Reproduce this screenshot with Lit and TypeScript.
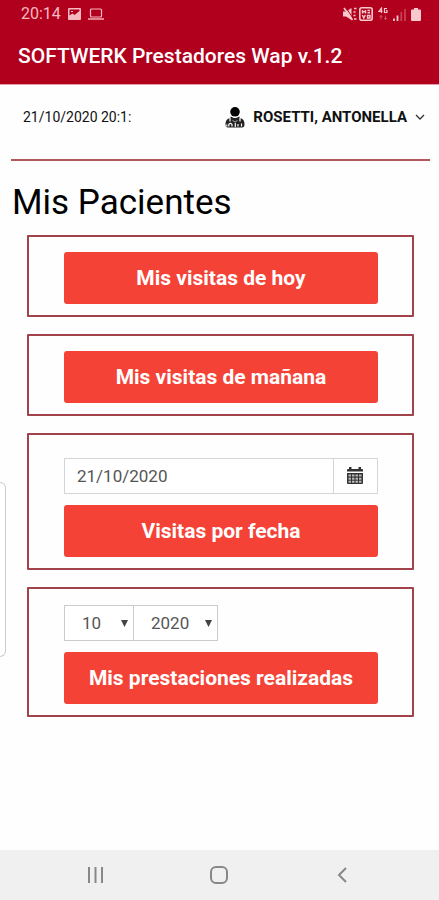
import { LitElement, html, css, svg } from "lit";
import { customElement, state } from "lit/decorators.js";

const months = ["1", "2", "3", "4", "5", "6", "7", "8", "9", "10", "11", "12"];
const years = ["2018", "2019", "2020", "2021"];

const pictureIcon = html`<svg class="icon" width="13" height="12" viewBox="0 0 13 12" aria-hidden="true">
  <path fill="currentColor" fill-rule="evenodd" d="M1 0h11a1 1 0 0 1 1 1v10a1 1 0 0 1-1 1H1a1 1 0 0 1-1-1V1a1 1 0 0 1 1-1zM1.500 1.500v6l3-2 2 1.500 5-4V1.500zM3 3h2v1H3z"/>
</svg>`;

const laptopIcon = html`<svg class="icon" width="16" height="12" viewBox="0 0 16 12" aria-hidden="true">
  <rect x="2.500" y="1" width="11" height="8" rx="1" fill="none" stroke="currentColor" stroke-width="1.200"/>
  <path d="M0 11h16" stroke="currentColor" stroke-width="1.400"/>
</svg>`;

const muteIcon = html`<svg class="icon" width="14" height="14" viewBox="0 0 14 14" aria-hidden="true">
  <path fill="currentColor" d="M0 4.500h3L8.500 1v12L3 9.500H0z"/>
  <path d="M2.500 0l8 12" stroke="#b1001d" stroke-width="1"/>
  <path d="M1 1l8.500 12" stroke="currentColor" stroke-width="1.600"/>
  <path d="M11 1.500h2.500M10.500 5h2M10.500 8.500h2M11 12h2.500" stroke="currentColor" stroke-width="1.500"/>
</svg>`;

const volteIcon = html`<svg class="icon" width="14" height="14" viewBox="0 0 14 14" aria-hidden="true">
  <rect x=".8" y=".8" width="12.400" height="12.400" rx="2" fill="none" stroke="currentColor" stroke-width="1.600"/>
  <path d="M3.500 3v3.500M3.500 4.700h3M6.500 3v3.500M8.500 3.500h2.500M8.500 5.800h2.500M3.300 8l1.500 3 1.500-3M8.500 8.500h2.500v2.500H8.500z" fill="none" stroke="currentColor" stroke-width="1.400"/>
</svg>`;

const dataIcon = html`<svg class="icon" width="10" height="14" viewBox="0 0 10 14" aria-hidden="true">
  <path d="M3.500 6V1L1 4.300h3.500M9 1.500H6.500v4H9V3.500H8" fill="none" stroke="currentColor" stroke-width="1.200"/>
  <path d="M3 8.500v4M1.500 10L3 8.500 4.500 10M7.500 8.500v4M6 11l1.500 1.500L9 11" fill="none" stroke="currentColor" stroke-width="1" opacity=".4"/>
</svg>`;

const signalIcon = html`<svg class="icon" width="13" height="13" viewBox="0 0 13 13" aria-hidden="true">
  <path d="M1 10.500V13M4.500 7.500V13" stroke="currentColor" stroke-width="1.800"/>
  <path d="M8.300 4v9M12 1v12" stroke="currentColor" stroke-width="1.600" opacity=".35"/>
</svg>`;

const batteryIcon = html`<svg class="icon" width="10" height="13" viewBox="0 0 10 13" aria-hidden="true">
  <path fill="currentColor" d="M3 0h4v1.500h2a1 1 0 0 1 1 1V12a1 1 0 0 1-1 1H1a1 1 0 0 1-1-1V2.500a1 1 0 0 1 1-1h2z"/>
</svg>`;

const doctorIcon = html`<svg class="icon" width="20" height="21" viewBox="0 0 20 21" aria-hidden="true">
  <circle cx="10" cy="4.800" r="4.800" fill="#000"/>
  <path fill="#111" d="M5.500 9.500l4.500 2 4.500-2v5h-9z"/>
  <path fill="#222" d="M5 11c-3 .5-4.500 3-4.500 6 0 2.500.8 3.500 2.500 3.500h14c1.700 0 2.500-1 2.500-3.500 0-3-1.500-5.500-4.500-6z"/>
  <path d="M5 11v3.500M15 11v3.500M3.800 19.500v-2a1.700 1.700 0 0 1 3.200 0v2M10.300 16v4M13 19.500v-2.500M16.500 19.500v-3M1.800 17.500v2" fill="none" stroke="#fff" stroke-width="1.200"/>
  <path d="M7.500 13.500l2.500 1.500 2.500-1.500" fill="none" stroke="#ccc" stroke-width=".8"/>
</svg>`;

const chevronIcon = html`<svg class="icon" width="10" height="6" viewBox="0 0 10 6" aria-hidden="true">
  <path d="M1 1l4 4 4-4" fill="none" stroke="#333" stroke-width="1.300"/>
</svg>`;

const calendarIcon = html`<svg class="icon" width="16" height="17" viewBox="0 0 16 17" aria-hidden="true">
  <path fill="#333" d="M0 4.500V3a1 1 0 0 1 1-1h1V0h2.500v2h7V0H14v2h1a1 1 0 0 1 1 1v1.500z"/>
  <path fill="#333" d="M0 6h16v10a1 1 0 0 1-1 1H1a1 1 0 0 1-1-1z"/>
  ${[1.5, 5, 8.5, 12].map((x) =>
    [7.5, 10.7, 13.7].map((y) => svg`<rect x=${x} y=${y} width="2.500" height="2" fill="#bbb"/>`)
  )}
</svg>`;

@customElement("app-root")
export class AppRoot extends LitElement {
  @state() private visitDate = "21/10/2020";
  @state() private month = "10";
  @state() private year = "2020";

  static styles = css`
    :host {
      display: flex;
      flex-direction: column;
      position: relative;
      min-height: 100vh;
      background: #fefefe;
      color: #111;
      font-family: Roboto, "Liberation Sans", sans-serif;
    }
    * { box-sizing: border-box; }
    .icon { display: block; flex: none; }
    button, input, select { font-family: inherit; margin: 0; }
    .top {
      background: #b1001d;
      border-bottom: 1px solid #e0a0a8;
      color: #fff;
    }
    .status {
      display: flex;
      align-items: center;
      justify-content: space-between;
      height: 28px;
      padding: 0 18px 0 21px;
      color: #f6b9c0;
      font-size: 16px;
      line-height: 28px;
    }
    .group { display: flex; align-items: center; gap: 7px; }
    .radio { gap: 2px; color: #f9c8cd; }
    .radio .icon:nth-child(n + 3) { margin-left: 3px; }
    .title {
      margin: 0;
      padding: 0 18px;
      font-size: 21px;
      font-weight: 500;
      line-height: 56px;
    }
    .user {
      display: flex;
      align-items: center;
      justify-content: space-between;
      height: 76px;
      margin: 0 9px 0 11px;
      padding: 0 5px 10px 12px;
      border-bottom: 2px solid #b0585c;
    }
    .clock { font-size: 14px; line-height: 20px; white-space: nowrap; }
    .account {
      display: flex;
      align-items: center;
      padding: 0;
      border: 0;
      background: none;
      color: #111;
      font-size: 15px;
      font-weight: 700;
      line-height: 20px;
      white-space: nowrap;
      gap: 8px;
    }
    h1 {
      margin: 21px 12px 11px;
      color: #000;
      font-size: 35px;
      font-weight: 400;
      line-height: 42px;
    }
    main { flex: 1; }
    .cards {
      display: flex;
      flex-direction: column;
      gap: 17px;
      padding: 0 25px 24px 27px;
    }
    .card {
      display: flex;
      flex-direction: column;
      gap: 11px;
      padding: 15px 34px 11px 35px;
      border: 2px solid #a0434a;
      border-radius: 1px;
    }
    .form { padding-top: 23px; }
    .period { padding-top: 16px; }
    .action {
      width: 100%;
      height: 52px;
      padding: 0;
      border: 0;
      border-radius: 3px;
      background: #f54236;
      color: #fff;
      font-size: 21px;
      font-weight: 700;
      line-height: 52px;
      white-space: nowrap;
    }
    .field { display: flex; height: 36px; }
    .date {
      flex: 1;
      min-width: 0;
      padding: 0 12px;
      border: 1px solid #d5d5d5;
      border-radius: 0;
      background: #fff;
      color: #555;
      font-size: 17px;
    }
    .pick {
      display: grid;
      place-items: center;
      width: 44px;
      padding: 0 2px 2px 0;
      border: 1px solid #d5d5d5;
      border-left: 0;
      background: #fff;
    }
    .choice { display: grid; align-items: center; }
    .choice + .choice { margin-left: -1px; }
    .choice > * { grid-area: 1 / 1; }
    .choice select {
      height: 36px;
      padding: 0 16px 0 17px;
      border: 1px solid #ccc;
      border-radius: 0;
      appearance: none;
      background: #fff;
      color: #555;
      font-size: 17px;
    }
    .month select { width: 70px; }
    .year select { width: 85px; }
    .arrow { justify-self: end; margin-right: 6px; pointer-events: none; }
    .edge {
      position: absolute;
      left: 0;
      top: 482px;
      width: 6px;
      height: 175px;
      border: 1px solid #ccc;
      border-left: 0;
      border-radius: 0 6px 6px 0;
      background: #fff;
    }
    .nav {
      display: flex;
      align-items: center;
      justify-content: space-around;
      height: 50px;
      padding: 0 36px 0 34px;
      background: #f0f0f0;
    }
    .nav button {
      display: grid;
      place-items: center;
      width: 48px;
      height: 48px;
      padding: 0;
      border: 0;
      background: none;
    }
  `;

  private renderSelect(kind: string, label: string, options: string[], value: string, set: (v: string) => void) {
    return html`<div class="choice ${kind}">
      <select aria-label=${label} @change=${(e: Event) => set((e.target as HTMLSelectElement).value)}>
        ${options.map((o) => html`<option value=${o} ?selected=${o === value}>${o}</option>`)}
      </select>
      <svg class="icon arrow" width="7" height="7" viewBox="0 0 7 7" aria-hidden="true">
        <path d="M0 0h7L3.500 7z" fill="#444"/>
      </svg>
    </div>`;
  }

  render() {
    return html`
      <header class="top">
        <div class="status">
          <div class="group"><span>20:14</span>${pictureIcon}${laptopIcon}</div>
          <div class="group radio">${muteIcon}${volteIcon}${dataIcon}${signalIcon}${batteryIcon}</div>
        </div>
        <p class="title">SOFTWERK Prestadores Wap v.1.2</p>
      </header>
      <main>
        <div class="user">
          <span class="clock">21/10/2020 20:1:</span>
          <button class="account" type="button">${doctorIcon}<span>ROSETTI, ANTONELLA</span>${chevronIcon}</button>
        </div>
        <h1>Mis Pacientes</h1>
        <div class="cards">
          <section class="card"><button class="action" type="button">Mis visitas de hoy</button></section>
          <section class="card"><button class="action" type="button">Mis visitas de mañana</button></section>
          <section class="card form">
            <div class="field">
              <input class="date" type="text" aria-label="Fecha" .value=${this.visitDate}
                @input=${(e: Event) => (this.visitDate = (e.target as HTMLInputElement).value)} />
              <button class="pick" type="button" aria-label="Elegir fecha">${calendarIcon}</button>
            </div>
            <button class="action" type="button">Visitas por fecha</button>
          </section>
          <section class="card period">
            <div class="field">
              ${this.renderSelect("month", "Mes", months, this.month, (v) => (this.month = v))}
              ${this.renderSelect("year", "Año", years, this.year, (v) => (this.year = v))}
            </div>
            <button class="action" type="button">Mis prestaciones realizadas</button>
          </section>
        </div>
      </main>
      <div class="edge"></div>
      <nav class="nav">
        <button type="button" aria-label="Recientes">
          <svg class="icon" width="17" height="16" viewBox="0 0 17 16"><path d="M2 0v16M8.500 0v16M15 0v16" stroke="#888" stroke-width="2"/></svg>
        </button>
        <button type="button" aria-label="Inicio">
          <svg class="icon" width="18" height="18" viewBox="0 0 18 18"><rect x="1" y="1" width="16" height="16" rx="5" fill="none" stroke="#888" stroke-width="2"/></svg>
        </button>
        <button type="button" aria-label="Atrás">
          <svg class="icon" width="10" height="16" viewBox="0 0 10 16"><path d="M9 1L2 8l7 7" fill="none" stroke="#888" stroke-width="2"/></svg>
        </button>
      </nav>
    `;
  }
}
